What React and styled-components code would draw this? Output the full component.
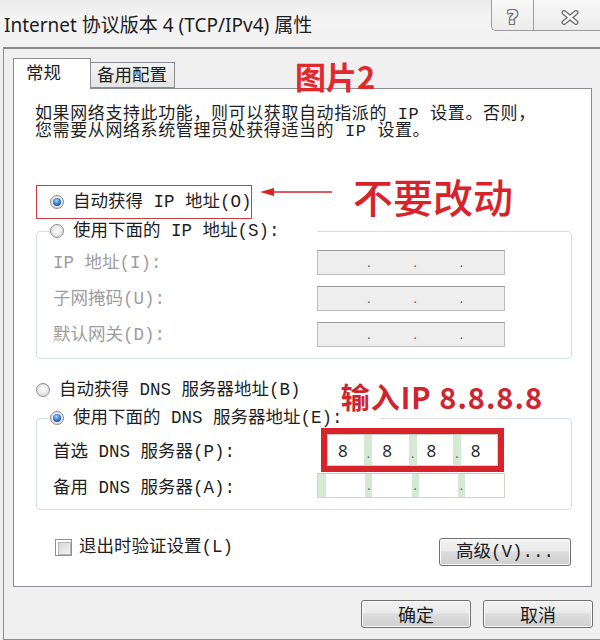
import React from "react";
import styled, { createGlobalStyle } from "styled-components";

const SONG = `"Liberation Mono", "Noto Sans CJK SC", monospace`;
const UI = `"Noto Sans", "Noto Sans CJK SC", sans-serif`;
const MARK = `"Noto Sans CJK SC", sans-serif`;
const RED = "#d8232a";
const GREEN = "#d5ead5";
const INK = "#1e1e1e";
const MUTED = "#9d9d9d";

const GlobalStyle = createGlobalStyle`
  html, body { margin: 0; padding: 0; }
  body { background: #f0f0f0; overflow: hidden; }
  * { box-sizing: border-box; }
`;

const Window = styled.div`
  width: 600px;
  height: 640px;
  display: flex;
  flex-direction: column;
  background: #f0f0f0;
  overflow: hidden;
`;

const TitleBar = styled.header`
  height: 47px;
  flex-shrink: 0;
  display: flex;
  align-items: flex-start;
  background: linear-gradient(180deg, #eaeaea 0%, #f4f4f4 35%, #f1f1f1 100%);
`;

const Title = styled.div`
  flex: 1;
  padding: 12px 0 0 4px;
  font-family: ${UI};
  font-size: 19px;
  line-height: 26px;
  color: #1c1c1c;
  white-space: nowrap;
`;

const CaptionButton = styled.div`
  width: ${(p) => p.$width}px;
  height: 31px;
  display: flex;
  align-items: center;
  justify-content: center;
  padding: ${(p) => p.$pad || "0"};
  border-left: 1px solid #9c9c9c;
  border-bottom: 1px solid #9c9c9c;
  border-bottom-left-radius: ${(p) => (p.$round ? "5px" : "0")};
  background: linear-gradient(180deg, #f8f8f8 0%, #ececec 100%);
`;

const HelpGlyph = styled.span`
  font-family: "DejaVu Sans", sans-serif;
  font-weight: bold;
  font-size: 20px;
  line-height: 1;
  color: #f7f7f7;
  padding-top: 3px;
  text-shadow: -1px 0 #6d6d6d, 1px 0 #6d6d6d, 0 -1px #6d6d6d, 0 1px #6d6d6d,
    -1px -1px #6d6d6d, 1px 1px #6d6d6d, -1px 1px #6d6d6d, 1px -1px #6d6d6d;
`;

const Client = styled.main`
  flex: 1;
  display: flex;
  flex-direction: column;
  margin-left: 3px;
  border: 1px solid #8e8e8e;
  border-top: 2px solid #8a8a8a;
  border-right: none;
  padding: 9px 7px 11px 9px;
`;

const TabStrip = styled.div`
  display: flex;
  align-items: flex-end;
  height: 30px;
  position: relative;
  z-index: 1;
`;

const Tab = styled.div`
  width: ${(p) => p.$width}px;
  height: ${(p) => (p.$active ? 31 : 26)}px;
  margin-bottom: ${(p) => (p.$active ? -1 : 0)}px;
  margin-left: ${(p) => (p.$active ? 0 : -1)}px;
  display: flex;
  align-items: center;
  padding: ${(p) => (p.$active ? "0 0 1px 12px" : "2px 0 0 6px")};
  border: 1px solid #898c95;
  border-bottom: ${(p) => (p.$active ? "none" : "1px solid #898c95")};
  background: ${(p) =>
    p.$active ? "#ffffff" : "linear-gradient(180deg, #f4f4f4 0%, #e4e4e4 100%)"};
  font-family: ${SONG};
  font-size: 17.5px;
  line-height: 20px;
  color: ${INK};
  white-space: nowrap;
`;

const Caption = styled.span`
  align-self: flex-end;
  margin: 0 0 -3px 120px;
  font-family: ${MARK};
  font-weight: 700;
  font-size: 31px;
  line-height: 30px;
  color: #e0282d;
  white-space: nowrap;
`;

const Panel = styled.section`
  flex: 1;
  display: flex;
  flex-direction: column;
  margin-right: 1px;
  padding: 17px 19px 0 22px;
  background: #ffffff;
  border: 1px solid #898c95;
`;

const Intro = styled.p`
  margin: 0 0 0 -1px;
  font-family: ${SONG};
  font-size: 17px;
  line-height: 17px;
  letter-spacing: 0.6px;
  color: ${INK};
  white-space: nowrap;
`;

const IntroLine = styled.span`
  display: block;
`;

const AnnotatedRow = styled.div`
  display: flex;
  align-items: flex-start;
  height: 34px;
  margin-top: 45px;
`;

const Highlight = styled.div`
  width: 216px;
  height: 34px;
  display: flex;
  align-items: center;
  padding-left: 13px;
  border: 1.5px solid #cf3b3d;
`;

const Arrow = styled.svg`
  flex-shrink: 0;
  margin: 1px 0 0 8px;
`;

const Warning = styled.span`
  margin: -9px 0 0 21px;
  font-family: ${MARK};
  font-weight: 500;
  font-size: 40px;
  line-height: 40px;
  color: ${RED};
  white-space: nowrap;
`;

const Choice = styled.label`
  display: inline-flex;
  align-items: center;
  gap: 9px;
  height: 20px;
  font-family: ${SONG};
  font-size: 17.5px;
  line-height: 20px;
  color: ${INK};
  white-space: nowrap;
  vertical-align: top;
`;

const RadioDot = styled.span`
  width: 14px;
  height: 14px;
  flex-shrink: 0;
  border-radius: 50%;
  border: 1px solid #8d8d8d;
  display: inline-flex;
  align-items: center;
  justify-content: center;
  background: radial-gradient(circle at 50% 45%, #ffffff 0%, #ebebeb 45%, #cfcfcf 100%);

  &::after {
    content: "";
    display: ${(p) => (p.$checked ? "block" : "none")};
    width: 8px;
    height: 8px;
    border-radius: 50%;
    background: radial-gradient(circle at 45% 35%, #a8d8ff 0%, #2c6fc4 55%, #143c78 100%);
  }
`;

const Group = styled.fieldset`
  margin: ${(p) => p.$top}px 0 0;
  padding: ${(p) => p.$padTop}px 0 ${(p) => p.$padBottom}px 16px;
  border: 1px solid #d5dfe5;
  border-radius: 4px;
  min-width: 0;
`;

const GroupLegend = styled.legend`
  height: 20px;
  margin-left: -3px;
  padding: 0 37px 0 0;
  line-height: 20px;
`;

const FieldGrid = styled.div`
  display: grid;
  grid-template-columns: ${(p) => p.$labelWidth}px auto;
  grid-template-rows: ${(p) => p.$rows};
  row-gap: ${(p) => p.$gap}px;
  align-items: center;
  justify-items: start;
`;

const FieldLabel = styled.span`
  padding-top: ${(p) => p.$nudge || 0}px;
  font-family: ${SONG};
  font-size: 17.5px;
  line-height: 20px;
  color: ${(p) => (p.$muted ? MUTED : INK)};
  white-space: nowrap;
`;

const IpBox = styled.div`
  display: flex;
  width: ${(p) => p.$w}px;
  height: ${(p) => p.$h}px;
  margin-left: ${(p) => p.$shift || 0}px;
  border: 1px solid ${(p) => (p.$disabled ? "#bcbcbc" : "#cdd6cd")};
  border-top-color: ${(p) => (p.$disabled ? "#9c9c9c" : "#c3ccc3")};
  background: ${(p) => (p.$disabled ? "#eeeeee" : "#ffffff")};
`;

const Lead = styled.span`
  width: ${(p) => p.$w}px;
  flex-shrink: 0;
  background: ${(p) => (p.$tint ? GREEN : "transparent")};
`;

const Octet = styled.span`
  flex: 1;
  display: flex;
  align-items: center;
  padding-left: 10px;
  font-family: "Noto Sans", sans-serif;
  font-size: 17px;
  color: #2b2b2b;
`;

const Dot = styled.span`
  width: ${(p) => p.$w}px;
  flex-shrink: 0;
  display: flex;
  align-items: flex-end;
  justify-content: center;
  padding-bottom: 5px;
  background: ${(p) => (p.$tint ? GREEN : "transparent")};
  font-family: "Noto Sans", sans-serif;
  font-size: 12px;
  line-height: 1;
  color: #5a5a5a;
`;

const Emphasis = styled.div`
  width: 183px;
  height: 44px;
  display: flex;
  border: 6px solid ${RED};
`;

const DnsChoiceRow = styled.div`
  display: flex;
  align-items: flex-start;
  height: 20px;
  margin-top: 21px;
`;

const Callout = styled.span`
  margin: 6px 29px 0 auto;
  font-family: ${MARK};
  font-weight: 700;
  font-size: 29px;
  line-height: 20px;
  letter-spacing: 1px;
  color: #cf2530;
  white-space: nowrap;
`;

const BottomRow = styled.div`
  display: flex;
  align-items: flex-start;
  justify-content: space-between;
  margin: 28px 1px 0 0;
  padding-left: 19px;
`;

const Check = styled.label`
  display: inline-flex;
  align-items: center;
  gap: 7px;
  margin-top: -1px;
  font-family: ${SONG};
  font-size: 17.5px;
  line-height: 20px;
  color: ${INK};
  white-space: nowrap;
`;

const CheckBox = styled.span`
  width: 17px;
  height: 17px;
  flex-shrink: 0;
  padding: 2px;
  border: 1px solid #8e8f8f;
  background: #ffffff;

  &::after {
    content: "";
    display: block;
    width: 100%;
    height: 100%;
    border: 1px solid #b8b8b8;
    background: linear-gradient(135deg, #d6d6d6 0%, #f4f4f4 100%);
  }
`;

const PushButton = styled.button`
  width: ${(p) => p.$w}px;
  height: 28px;
  padding: 0;
  border: 1px solid #707070;
  border-radius: 3px;
  background: linear-gradient(180deg, #f2f2f2 0%, #ebebeb 45%, #dddddd 50%, #cfcfcf 100%);
  box-shadow: inset 0 0 0 1px #fbfbfb;
  font-family: ${(p) => (p.$song ? SONG : MARK)};
  font-size: ${(p) => (p.$song ? 17.5 : 18)}px;
  line-height: 26px;
  color: #1c1c1c;
  white-space: nowrap;
`;

const Footer = styled.footer`
  display: flex;
  justify-content: flex-end;
  gap: 12px;
  margin-top: 13px;
`;

function Radio({ checked, muted, children }) {
  return (
    <Choice style={muted ? { color: MUTED } : undefined}>
      <RadioDot $checked={checked} />
      {children}
    </Choice>
  );
}

function IpAddress({ values = [], disabled, w, h, lead = 0, sep = 7, tint, shift }) {
  return (
    <IpBox $w={w} $h={h} $disabled={disabled} $shift={shift}>
      {lead > 0 && <Lead $w={lead} $tint={tint} />}
      {[0, 1, 2, 3].map((i) => (
        <React.Fragment key={i}>
          {i > 0 && (
            <Dot $w={sep} $tint={tint}>
              .
            </Dot>
          )}
          <Octet>{values[i] || ""}</Octet>
        </React.Fragment>
      ))}
    </IpBox>
  );
}

function CloseIcon() {
  const d = "M3 2.5 L15 12.5 M15 2.5 L3 12.5";
  return (
    <svg width="18" height="15" viewBox="0 0 18 15">
      <path d={d} stroke="#6d6d6d" strokeWidth="5" strokeLinecap="round" fill="none" />
      <path d={d} stroke="#fafafa" strokeWidth="2.4" strokeLinecap="round" fill="none" />
    </svg>
  );
}

export default function App() {
  return (
    <>
      <GlobalStyle />
      <Window>
        <TitleBar>
          <Title>Internet 协议版本 4 (TCP/IPv4) 属性</Title>
          <CaptionButton $width={42} $round>
            <HelpGlyph>?</HelpGlyph>
          </CaptionButton>
          <CaptionButton $width={67} $pad="4px 0 0 6px">
            <CloseIcon />
          </CaptionButton>
        </TitleBar>

        <Client>
          <TabStrip>
            <Tab $active $width={78}>常规</Tab>
            <Tab $width={85}>备用配置</Tab>
            <Caption>图片2</Caption>
          </TabStrip>

          <Panel>
            <Intro>
              <IntroLine>如果网络支持此功能，则可以获取自动指派的 IP 设置。否则，</IntroLine>
              <IntroLine>您需要从网络系统管理员处获得适当的 IP 设置。</IntroLine>
            </Intro>

            <AnnotatedRow>
              <Highlight>
                <Radio checked>自动获得 IP 地址(O)</Radio>
              </Highlight>
              <Arrow width="72" height="12" viewBox="0 0 72 12">
                <path d="M12 6 H72" stroke={RED} strokeWidth="1.6" />
                <path d="M0 6 L14 2 L14 10 Z" fill={RED} />
              </Arrow>
              <Warning>不要改动</Warning>
            </AnnotatedRow>

            <Group $top={2} $padTop={9} $padBottom={11}>
              <GroupLegend>
                <Radio>使用下面的 IP 地址(S):</Radio>
              </GroupLegend>
              <FieldGrid $labelWidth={264} $rows="25px 25px 25px" $gap={11}>
                <FieldLabel $muted>IP 地址(I):</FieldLabel>
                <IpAddress disabled w={188} h={25} lead={8} />
                <FieldLabel $muted>子网掩码(U):</FieldLabel>
                <IpAddress disabled w={188} h={25} lead={8} />
                <FieldLabel $muted>默认网关(D):</FieldLabel>
                <IpAddress disabled w={188} h={25} lead={8} />
              </FieldGrid>
            </Group>

            <DnsChoiceRow>
              <Radio>自动获得 DNS 服务器地址(B)</Radio>
              <Callout>输入IP 8.8.8.8</Callout>
            </DnsChoiceRow>

            <Group $top={8} $padTop={0} $padBottom={11}>
              <GroupLegend>
                <Radio checked>使用下面的 DNS 服务器地址(E):</Radio>
              </GroupLegend>
              <FieldGrid $labelWidth={268} $rows="44px 25px" $gap={1}>
                <FieldLabel $nudge={3}>首选 DNS 服务器(P):</FieldLabel>
                <Emphasis>
                  <IpAddress w={171} h={32} sep={8} tint values={["8", "8", "8", "8"]} />
                </Emphasis>
                <FieldLabel $nudge={4}>备用 DNS 服务器(A):</FieldLabel>
                <IpAddress w={188} h={25} lead={8} tint shift={-4} />
              </FieldGrid>
            </Group>

            <BottomRow>
              <Check>
                <CheckBox />
                退出时验证设置(L)
              </Check>
              <PushButton $w={132} $song>高级(V)...</PushButton>
            </BottomRow>
          </Panel>

          <Footer>
            <PushButton $w={110}>确定</PushButton>
            <PushButton $w={110}>取消</PushButton>
          </Footer>
        </Client>
      </Window>
    </>
  );
}
